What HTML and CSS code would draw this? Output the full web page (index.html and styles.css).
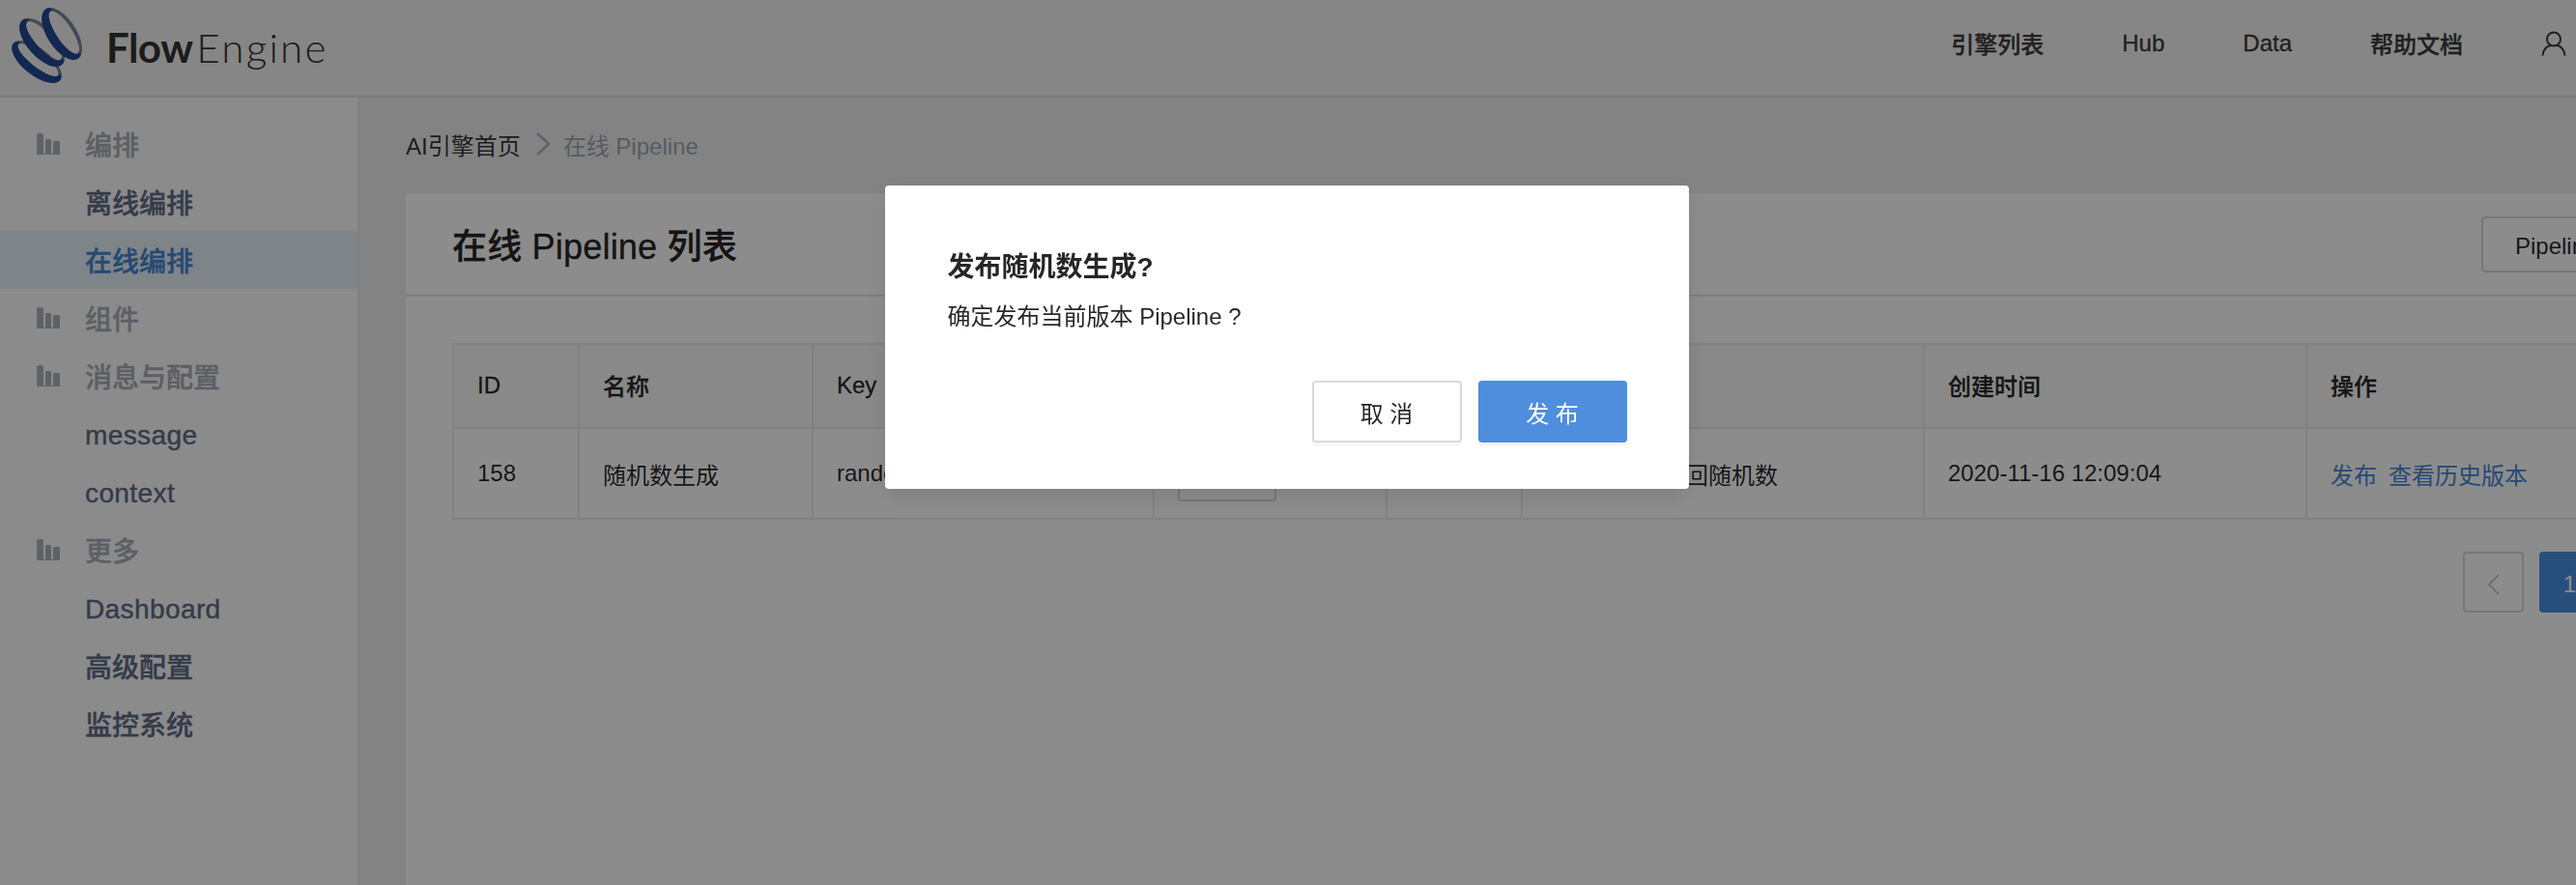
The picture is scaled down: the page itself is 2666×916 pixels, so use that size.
FILE: index.html
```html
<!DOCTYPE html>
<html lang="en">
<head>
    <meta charset="UTF-8">
    <title>在线 Pipeline</title>
    <link rel="stylesheet" href="styles.css">
</head>
<body>
    <header class="topbar">
        <div class="brand">
            <svg class="brand-logo" width="100" height="92" viewBox="0 0 100 92">
                <defs>
                    <linearGradient id="ring" x1="0" y1="0" x2="0" y2="1">
                        <stop offset="0.28" stop-color="#76859f"/>
                        <stop offset="0.4" stop-color="#224a94"/>
                    </linearGradient>
                </defs>
                <path transform="translate(38 63) rotate(38)" fill="url(#ring)" fill-rule="evenodd" d="M-31 0A31 14 0 1 0 31 0A31 14 0 1 0 -31 0ZM-26 -2.500A26 7.500 0 1 0 26 -2.500A26 7.500 0 1 0 -26 -2.500Z"/>
                <path transform="translate(43.500 43) rotate(48)" fill="url(#ring)" fill-rule="evenodd" d="M-31 0A31 15 0 1 0 31 0A31 15 0 1 0 -31 0ZM-26 -2.750A26 8.250 0 1 0 26 -2.750A26 8.250 0 1 0 -26 -2.750Z"/>
                <path transform="translate(64 34) rotate(57)" fill="url(#ring)" fill-rule="evenodd" d="M-30.700 0A30.700 15 0 1 0 30.700 0A30.700 15 0 1 0 -30.700 0ZM-26 -2.750A26 8.250 0 1 0 26 -2.750A26 8.250 0 1 0 -26 -2.750Z"/>
            </svg>
            <span class="brand-name"><b>Flow</b><span class="brand-light">Engine</span></span>
        </div>
        <nav class="topnav">
            <a>引擎列表</a>
            <a>Hub</a>
            <a>Data</a>
            <a>帮助文档</a>
            <svg class="user-icon" width="26" height="26" viewBox="0 0 26 26" fill="none" stroke="#3a3a3a" stroke-width="2">
                <circle cx="13" cy="8.500" r="7"/>
                <path d="M1.500 25.500C2 19 6 15.500 10 15M24.500 25.500C24 19 20 15.500 16 15"/>
            </svg>
        </nav>
    </header>

    <div class="layout">
        <aside class="sidebar">
            <div class="menu-group"><svg class="menu-icon" width="24" height="24" viewBox="0 0 24 24"><path d="M0 22V3q0-2 2-2h3q2 0 2 2v19zM9 22V8q0-1 1-1h4q1 0 1 1v14zM17 22V10q0-1 1-1h5q1 0 1 1v12zM0 22h24v1H0z"/></svg>编排</div>
            <a class="menu-item">离线编排</a>
            <a class="menu-item active">在线编排</a>
            <div class="menu-group"><svg class="menu-icon" width="24" height="24" viewBox="0 0 24 24"><path d="M0 22V3q0-2 2-2h3q2 0 2 2v19zM9 22V8q0-1 1-1h4q1 0 1 1v14zM17 22V10q0-1 1-1h5q1 0 1 1v12zM0 22h24v1H0z"/></svg>组件</div>
            <div class="menu-group"><svg class="menu-icon" width="24" height="24" viewBox="0 0 24 24"><path d="M0 22V3q0-2 2-2h3q2 0 2 2v19zM9 22V8q0-1 1-1h4q1 0 1 1v14zM17 22V10q0-1 1-1h5q1 0 1 1v12zM0 22h24v1H0z"/></svg>消息与配置</div>
            <a class="menu-item latin">message</a>
            <a class="menu-item latin">context</a>
            <div class="menu-group"><svg class="menu-icon" width="24" height="24" viewBox="0 0 24 24"><path d="M0 22V3q0-2 2-2h3q2 0 2 2v19zM9 22V8q0-1 1-1h4q1 0 1 1v14zM17 22V10q0-1 1-1h5q1 0 1 1v12zM0 22h24v1H0z"/></svg>更多</div>
            <a class="menu-item latin">Dashboard</a>
            <a class="menu-item">高级配置</a>
            <a class="menu-item">监控系统</a>
        </aside>

        <main class="content">
            <div class="breadcrumb">
                <span>AI引擎首页</span>
                <svg class="crumb-sep" width="14" height="24" viewBox="0 0 14 24" fill="none" stroke="#a9afba" stroke-width="2.500"><path d="M1 1l12 11L1 23"/></svg>
                <span class="crumb-current">在线 Pipeline</span>
            </div>

            <section class="card">
                <div class="card-head">
                    <h2>在线 Pipeline 列表</h2>
                    <button class="btn-outline">Pipeline 模板</button>
                </div>
                <div class="card-body">
                    <table class="pipeline-table">
                        <colgroup>
                            <col class="col-id"><col class="col-name"><col class="col-key"><col class="col-version"><col class="col-status"><col class="col-desc"><col class="col-time"><col class="col-ops">
                        </colgroup>
                        <thead>
                            <tr>
                                <th>ID</th><th>名称</th><th>Key</th><th>版本</th><th>状态</th><th>描述</th><th>创建时间</th><th>操作</th>
                            </tr>
                        </thead>
                        <tbody>
                            <tr>
                                <td>158</td>
                                <td>随机数生成</td>
                                <td>random-number</td>
                                <td><span class="version-box">v1</span></td>
                                <td>在线</td>
                                <td>生成数字并返回随机数</td>
                                <td>2020-11-16 12:09:04</td>
                                <td><a class="op-link">发布</a><a class="op-link">查看历史版本</a></td>
                            </tr>
                        </tbody>
                    </table>
                    <div class="pager">
                        <a class="page-btn"><svg width="14" height="24" viewBox="0 0 14 24" fill="none" stroke="#bbb" stroke-width="1.500"><path d="M12 2L2 12l10 10"/></svg></a>
                        <a class="page-btn current">1</a>
                        <a class="page-btn"><svg width="14" height="24" viewBox="0 0 14 24" fill="none" stroke="#bbb" stroke-width="1.500"><path d="M2 2l10 10L2 22"/></svg></a>
                    </div>
                </div>
            </section>
        </main>
    </div>

    <!-- Confirm dialog -->
    <div class="mask">
        <div class="modal">
            <h3>发布随机数生成?</h3>
            <p>确定发布当前版本 Pipeline ?</p>
            <div class="modal-actions">
                <button class="btn-cancel">取 消</button>
                <button class="btn-primary">发 布</button>
            </div>
        </div>
    </div>
</body>
</html>
```

FILE: styles.css
```css
/* General Styles */
* {
    box-sizing: border-box;
}

html, body {
    height: 100%;
}

body {
    margin: 0;
    overflow: hidden;
    font-family: "Liberation Sans", "Noto Sans CJK SC", sans-serif;
    font-size: 24px;
    background-color: #eeeeee;
    color: rgba(0, 0, 0, 0.85);
}

/* Top bar */
.topbar {
    display: flex;
    align-items: center;
    justify-content: space-between;
    height: 101px;
    background-color: #f4f4f4;
    border-bottom: 2px solid #e2e2e2;
}

.brand {
    display: flex;
    align-items: center;
    height: 92px;
    margin-top: -6px;
}

.brand-name {
    margin-left: 10px;
    margin-top: 4px;
    font-family: Lato, sans-serif;
    font-size: 42px;
    font-weight: 300;
    color: #333;
}

.brand-name b {
    font-weight: 700;
    letter-spacing: -0.5px;
    margin-right: 4px;
}

.brand-light {
    letter-spacing: 2.3px;
}

.topnav {
    display: flex;
    align-items: center;
    margin-right: 10px;
    gap: 81px;
    margin-top: -10px;
}

.topnav a {
    font-weight: 500;
    color: #3a3a3a;
    -webkit-text-stroke: 0.3px;
}

/* Layout */
.layout {
    display: flex;
    height: 815px;
}

.sidebar {
    flex: none;
    width: 372px;
    padding-top: 18px;
    background-color: #fdfdfd;
    border-right: 2px solid #e9e9e9;
}

.menu-group, .menu-item {
    display: flex;
    align-items: center;
    height: 60px;
    font-size: 28px;
    font-weight: 500;
    -webkit-text-stroke: 0.4px;
}

.menu-group {
    padding-left: 38px;
    color: #a8adb6;
}

.menu-icon {
    margin-right: 26px;
    fill: #acb2bc;
}

.menu-item {
    padding-left: 88px;
    color: #5f6c85;
}

.menu-item.latin {
    padding-top: 3px;
    letter-spacing: 0.4px;
}

.menu-item.active {
    background-color: #e7f1f7;
    color: #4585d0;
}

/* Main */
.content {
    flex: none;
    width: 2400px;
    padding-left: 48px;
}

.breadcrumb {
    display: flex;
    align-items: center;
    height: 99px;
    padding-bottom: 3px;
    color: rgba(0, 0, 0, 0.8);
}

.crumb-sep {
    margin: 0 14px 0 16px;
}

.crumb-current {
    color: #9ea6b3;
}

.card {
    width: 2350px;
    height: 720px;
    background-color: #fff;
}

.card-head {
    display: flex;
    align-items: center;
    justify-content: space-between;
    height: 107px;
    padding: 0 0 0 48px;
    border-bottom: 2px solid #e5e5e8;
}

.card-head h2 {
    margin: -2px 0 0;
    font-size: 36px;
    font-weight: 500;
    letter-spacing: 0.2px;
    -webkit-text-stroke: 0.4px;
}

.btn-outline {
    width: 400px;
    height: 58px;
    margin-right: -198px;
    padding: 0 0 0 33px;
    text-align: left;
    font: inherit;
    background-color: #fff;
    border: 2px solid #d9d9d9;
    border-radius: 4px;
    color: rgba(0, 0, 0, 0.85);
}

.card-body {
    padding: 48px 0 0 48px;
}

/* Table */
.pipeline-table {
    table-layout: fixed;
    width: 2302px;
    border-collapse: collapse;
    border: 2px solid #ebebeb;
}

.pipeline-table th, .pipeline-table td {
    padding: 0 0 0 24px;
    border: 2px solid #ebebeb;
    text-align: left;
    white-space: nowrap;
    overflow: hidden;
}

.pipeline-table th {
    height: 87px;
    padding-bottom: 2px;
    font-weight: 500;
    background-color: #fafafa;
    -webkit-text-stroke: 0.3px;
}

.pipeline-table td {
    height: 94px;
}

.col-id { width: 130px; }
.col-name { width: 242px; }
.col-key { width: 353px; }
.col-version { width: 241px; }
.col-status { width: 140px; }
.col-desc { width: 416px; }
.col-time { width: 396px; }

.version-box {
    display: inline-block;
    width: 102px;
    height: 58px;
    border: 2px solid #d9d9d9;
    border-radius: 4px;
}

.op-link {
    margin-right: 12px;
    color: #4585d0;
}

/* Pagination */
.pager {
    display: flex;
    justify-content: flex-end;
    gap: 16px;
    margin-top: 33px;
}

.page-btn {
    display: flex;
    align-items: center;
    justify-content: center;
    width: 63px;
    height: 63px;
    padding-top: 4px;
    border: 2px solid #d9d9d9;
    border-radius: 4px;
}

.page-btn.current {
    background-color: #4a90e2;
    border-color: #4a90e2;
    color: #fff;
}

/* Confirm dialog */
.mask {
    position: fixed;
    top: 0;
    left: 0;
    right: 0;
    bottom: 0;
    display: flex;
    justify-content: center;
    align-items: flex-start;
    padding: 192px 3px 0 0;
    background-color: rgba(0, 0, 0, 0.45);
}

.modal {
    width: 832px;
    height: 314px;
    padding: 65px 64px 0 65px;
    background-color: #fff;
    border-radius: 4px;
    box-shadow: 0 8px 24px rgba(0, 0, 0, 0.1);
}

.modal h3 {
    margin: 0;
    font-size: 28px;
    line-height: 40px;
    font-weight: 700;
}

.modal p {
    margin: 14px 0 0;
    line-height: 34px;
}

.modal-actions {
    display: flex;
    justify-content: flex-end;
    gap: 17px;
    margin-top: 49px;
}

.btn-cancel, .btn-primary {
    width: 155px;
    height: 64px;
    font: inherit;
    border-radius: 4px;
}

.btn-cancel {
    background-color: #fff;
    border: 2px solid #d9d9d9;
    box-shadow: 0 4px 0 #f7f7f7;
    color: rgba(0, 0, 0, 0.85);
}

.btn-primary {
    width: 154px;
    background-color: #4f8edc;
    border: none;
    box-shadow: 0 4px 0 #f5f5f5;
    color: #fff;
}
```
